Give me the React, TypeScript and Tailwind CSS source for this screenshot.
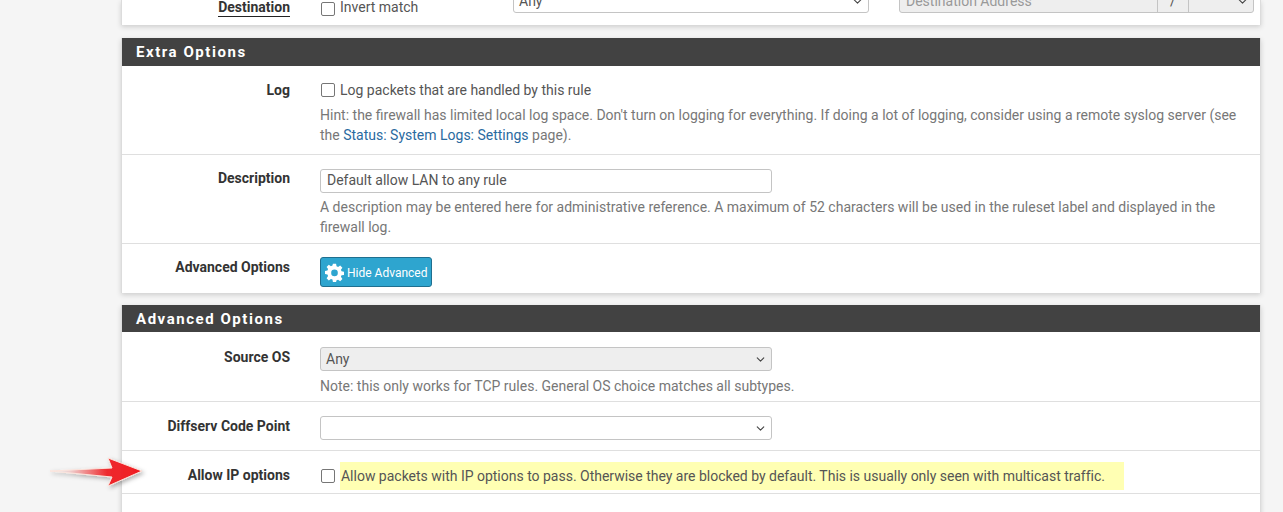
import React from 'react';
import { ChevronDown } from 'lucide-react';

const Check = () => (
  <span className="block h-[14px] w-[14px] shrink-0 rounded-[2px] border border-[#767676] bg-white" />
);

const Label = ({ children, top }: { children: React.ReactNode; top: string }) => (
  <div className={`w-[168px] shrink-0 text-right text-[14px] leading-[20px] font-bold text-[#333] ${top}`}>{children}</div>
);

const Select = ({ className, text }: { className: string; text?: string }) => (
  <div className={`flex h-[24px] items-center justify-between rounded-[3px] border border-[#c4c4c4] pl-[5px] pr-[4px] text-[14px] text-[#555] ${className}`}>
    <span>{text}</span>
    <ChevronDown size={13} strokeWidth={2} className="text-[#444]" />
  </div>
);

const Hint = ({ children }: { children: React.ReactNode }) => (
  <div className="text-[14px] leading-[20px] text-[#777]">{children}</div>
);

const Header = ({ title, className }: { title: string; className: string }) => (
  <div className={`flex items-center bg-[#424242] pl-[14px] text-[15px] font-bold tracking-[1.55px] text-white ${className}`}>{title}</div>
);

const Panel = ({ children, className = '' }: { children: React.ReactNode; className?: string }) => (
  <div className={`border-x border-[#dcdcdc] bg-white shadow-[0_2px_5px_rgba(0,0,0,0.16)] ${className}`}>{children}</div>
);

const Gear = () => (
  <svg viewBox="0 0 24 24" className="h-[19px] w-[19px] shrink-0" fill="#fff">
    <path
      fillRule="evenodd"
      d="M10 1h4l.6 3.2 1.9.8L19.2 3.2 22 6l-1.9 2.6.8 1.9 3.1.5v4l-3.1.6-.8 1.9 1.9 2.7-2.8 2.8-2.7-1.9-1.9.8L14 24h-4l-.6-3.1-1.9-.8L4.8 22 2 19.200l1.900-2.700-.8-1.900L0 14v-4l3.100-.5.8-1.900L2 5l2.800-2.800 2.700 1.900 1.900-.8zM12 8.300a4.200 4.200 0 1 0 0 8.400 4.200 4.200 0 0 0 0-8.400z"
    />
  </svg>
);

const App = () => {
  return (
    <div className="relative h-[512px] w-[1283px] overflow-hidden bg-[#f5f5f5] font-['Roboto',sans-serif]">
      <div className="ml-[121px] w-[1140px]">
        <Panel>
          <div className="flex h-[25px] items-start">
            <div className="mt-[-3px] flex items-start">
              <Label top="">
                <span className="border-b border-[#222] pb-[1px]">Destination</span>
              </Label>
              <div className="ml-[31px] flex items-start gap-[5px] text-[14px] leading-[20px] text-[#555]">
                <div className="pt-[5px]">
                  <Check />
                </div>
                <span>Invert match</span>
              </div>
            </div>
          </div>
        </Panel>

        <Panel className="mt-[13px]">
          <Header title="Extra Options" className="h-[28px]" />
          <div className="flex h-[89px] border-b border-[#dfdfdf] pt-[14px]">
            <Label top="">Log</Label>
            <div className="ml-[30px] w-[925px]">
              <div className="flex items-center gap-[5px] pl-[1px] text-[14px] leading-[20px] text-[#555]">
                <Check />
                <span>Log packets that are handled by this rule</span>
              </div>
              <div className="mt-[5px]">
                <Hint>
                  Hint: the firewall has limited local log space. Don't turn on logging for everything. If doing a lot of logging, consider using a remote syslog server (see the <span className="text-[#2a6aa0]">Status: System Logs: Settings</span> page).
                </Hint>
              </div>
            </div>
          </div>
          <div className="flex h-[89px] border-b border-[#dfdfdf] pt-[14px]">
            <Label top="mt-[-1px]">Description</Label>
            <div className="ml-[30px] w-[925px]">
              <div className="flex h-[24px] w-[452px] items-center rounded-[3px] border border-[#c4c4c4] pb-[1px] pl-[6px] text-[14px] text-[#555]">
                Default allow LAN to any rule
              </div>
              <div className="mt-[4px]">
                <Hint>A description may be entered here for administrative reference. A maximum of 52 characters will be used in the ruleset label and displayed in the firewall log.</Hint>
              </div>
            </div>
          </div>
          <div className="flex h-[49px] pt-[13px]">
            <Label top="">Advanced Options</Label>
            <div className="ml-[30px]">
              <div className="flex h-[30px] w-[112px] items-center gap-[3px] rounded-[3px] border border-[#1f6f8f] bg-[#2ea5cf] pl-[4px] text-[12px] text-white">
                <Gear />
                <span className="pt-[1px]">Hide Advanced</span>
              </div>
            </div>
          </div>
        </Panel>

        <Panel className="mt-[12px] h-[300px]">
          <Header title="Advanced Options" className="h-[27px] pt-[1px]" />
          <div className="flex h-[70px] border-b border-[#dfdfdf] pt-[15px]">
            <Label top="">Source OS</Label>
            <div className="ml-[30px]">
              <Select className="w-[452px] bg-[#eeeeee]" text="Any" />
              <div className="mt-[5px]">
                <Hint>Note: this only works for TCP rules. General OS choice matches all subtypes.</Hint>
              </div>
            </div>
          </div>
          <div className="flex h-[49px] border-b border-[#dfdfdf] pt-[14px]">
            <Label top="">Diffserv Code Point</Label>
            <div className="ml-[30px]">
              <Select className="w-[452px] bg-white" />
            </div>
          </div>
          <div className="flex h-[43px] border-b border-[#dfdfdf]">
            <Label top="pt-[14px]">Allow IP options</Label>
            <div className="ml-[31px] flex items-start pt-[11px]">
              <div className="pt-[7px]">
                <Check />
              </div>
              <div className="ml-[5px] h-[28px] w-[784px] bg-[#ffffb3] pl-[1px] text-[14px] leading-[28px] tracking-[-0.01px] text-[#555]">
                Allow packets with IP options to pass. Otherwise they are blocked by default. This is usually only seen with multicast traffic.
              </div>
            </div>
          </div>
        </Panel>
      </div>

      {/* selects of the clipped destination row */}
      <div className="absolute top-[-11px] left-[513px]">
        <Select className="w-[356px] bg-white" text="Any" />
      </div>
      <div className="absolute top-[-11px] left-[899px] flex h-[24px] w-[355px] overflow-hidden rounded-[3px] border border-[#c4c4c4] bg-[#eeeeee] text-[14px] text-[#999]">
        <div className="flex w-[257px] items-center pl-[6px]">Destination Address</div>
        <div className="flex w-[32px] items-center justify-center border-x border-[#c4c4c4] text-[#555]">/</div>
        <div className="flex flex-1 items-center justify-end pr-[4px]">
          <ChevronDown size={13} className="text-[#444]" />
        </div>
      </div>

      {/* annotation arrow */}
      <svg className="absolute top-[452px] left-[48px]" width="104" height="40" viewBox="0 0 104 40">
        <defs>
          <linearGradient id="tail" x1="0" x2="1" y1="0" y2="0">
            <stop offset="0" stopColor="#f5f5f5" stopOpacity="0" />
            <stop offset="0.35" stopColor="#f09a9a" />
            <stop offset="0.62" stopColor="#ee2a2e" />
            <stop offset="1" stopColor="#f01c22" />
          </linearGradient>
          <filter id="sh" x="-10%" y="-20%" width="125%" height="150%">
            <feDropShadow dx="2" dy="2" stdDeviation="2" floodColor="#000" floodOpacity="0.3" />
          </filter>
        </defs>
        <path
          d="M2 19 L64 16 L60 6 L94 19 L60 34 L64 25 Z"
          fill="url(#tail)"
          stroke="#fbe4dc"
          strokeWidth="1"
          filter="url(#sh)"
        />
      </svg>
    </div>
  );
};

export default App;
